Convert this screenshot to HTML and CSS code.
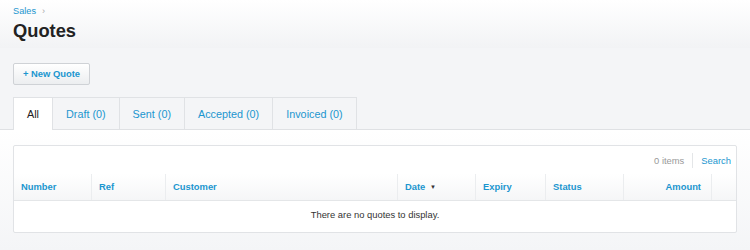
FILE: index.html
```html
<!DOCTYPE html>
<html lang="en">
<head>
    <meta charset="UTF-8">
    <title>Quotes</title>
    <link rel="stylesheet" href="styles.css">
</head>
<body>
<div id="page-header">
    <div class="breadcrumb"><a href="#">Sales</a><span class="crumb-sep">&rsaquo;</span></div>
    <h1 class="page-title">Quotes</h1>
</div>
<div id="actions">
    <a href="#" class="button">+ New Quote</a>
</div>
<div id="tabs">
    <a href="#" class="tab selected">All</a>
    <a href="#" class="tab">Draft (0)</a>
    <a href="#" class="tab">Sent (0)</a>
    <a href="#" class="tab">Accepted (0)</a>
    <a href="#" class="tab">Invoiced (0)</a>
</div>
<div id="content">
    <div class="list-panel">
        <div class="list-toolbar">
            <span class="item-count">0 items</span>
            <a href="#" class="search-link">Search</a>
        </div>
        <div class="list-head">
            <span class="col col-number">Number</span>
            <span class="col col-ref">Ref</span>
            <span class="col col-customer">Customer</span>
            <span class="col col-date">Date <span class="sort-arrow">&#9660;</span></span>
            <span class="col col-expiry">Expiry</span>
            <span class="col col-status">Status</span>
            <span class="col col-amount">Amount</span>
            <span class="col col-blank"></span>
        </div>
        <div class="empty-row">There are no quotes to display.</div>
    </div>
</div>
</body>
</html>
```

FILE: styles.css
```css
body {
    margin: 0;
    padding: 0;
    background: #f4f5f7;
    font-family: "Liberation Sans", Arial, sans-serif;
    font-size: 9.4px;
    color: #333;
}
a {
    color: #1b96cf;
    text-decoration: none;
}
#page-header {
    height: 48px;
    padding: 0 13px;
    background: linear-gradient(#ffffff, #f2f3f5);
    box-sizing: border-box;
    padding-top: 5px;
}
.breadcrumb {
    line-height: 13px;
    font-size: 9.2px;
}
.crumb-sep {
    color: #aaa;
    padding-left: 6px;
}
.page-title {
    margin: 2px 0 0 0;
    font-size: 18.3px;
    line-height: 22px;
    font-weight: bold;
    color: #222;
}
#actions {
    padding: 15px 13px 11px 13px;
    height: 23px;
}
.button {
    display: inline-block;
    height: 20px;
    line-height: 20px;
    padding: 0 9px;
    border: 1px solid #cfd2d6;
    border-radius: 2px;
    background: linear-gradient(#ffffff, #eceef0);
    font-weight: bold;
}
#tabs {
    display: flex;
    padding: 0 13px;
    border-bottom: 1px solid #dfe1e4;
    height: 32px;
}
.tab {
    display: block;
    height: 32px;
    line-height: 32px;
    padding: 0 13px;
    font-size: 10.8px;
    border: 1px solid #e0e2e5;
    border-bottom: none;
    border-left: none;
    background: #f4f5f7;
    box-sizing: border-box;
}
.tab:first-child {
    border-left: 1px solid #e0e2e5;
}
.tab.selected {
    background: #fff;
    color: #222;
    height: 33px;
}
#content {
    background: linear-gradient(#ffffff, #f4f5f7 120px);
    padding: 15px 13px 20px 13px;
}
.list-panel {
    background: #fff;
    border: 1px solid #e1e3e6;
    border-radius: 2px;
}
.list-toolbar {
    display: flex;
    justify-content: flex-end;
    align-items: center;
    height: 28px;
    padding-right: 5px;
}
.item-count {
    color: #999;
    padding-right: 8px;
    border-right: 1px solid #e4e6e8;
    line-height: 15px;
}
.search-link {
    padding-left: 8px;
    line-height: 15px;
}
.list-head {
    display: flex;
    height: 26px;
    background: linear-gradient(#ffffff, #f5f6f7);
    border-bottom: 1px solid #e4e6e8;
}
.col {
    box-sizing: border-box;
    line-height: 26px;
    padding-left: 7px;
    font-weight: bold;
    color: #1b96cf;
    border-right: 1px solid #ebedef;
}
.col-number { width: 78px; }
.col-ref { width: 74px; }
.col-customer { width: 232px; }
.col-date { width: 78px; }
.col-expiry { width: 70px; }
.col-status { width: 78px; }
.col-amount { width: 88px; text-align: right; padding-right: 10px; }
.col-blank { flex: 1; border-right: none; }
.sort-arrow {
    font-size: 6px;
    color: #333;
    padding-left: 2px;
    vertical-align: 1px;
}
.empty-row {
    height: 31px;
    line-height: 28px;
    text-align: center;
    color: #333;
}
```
